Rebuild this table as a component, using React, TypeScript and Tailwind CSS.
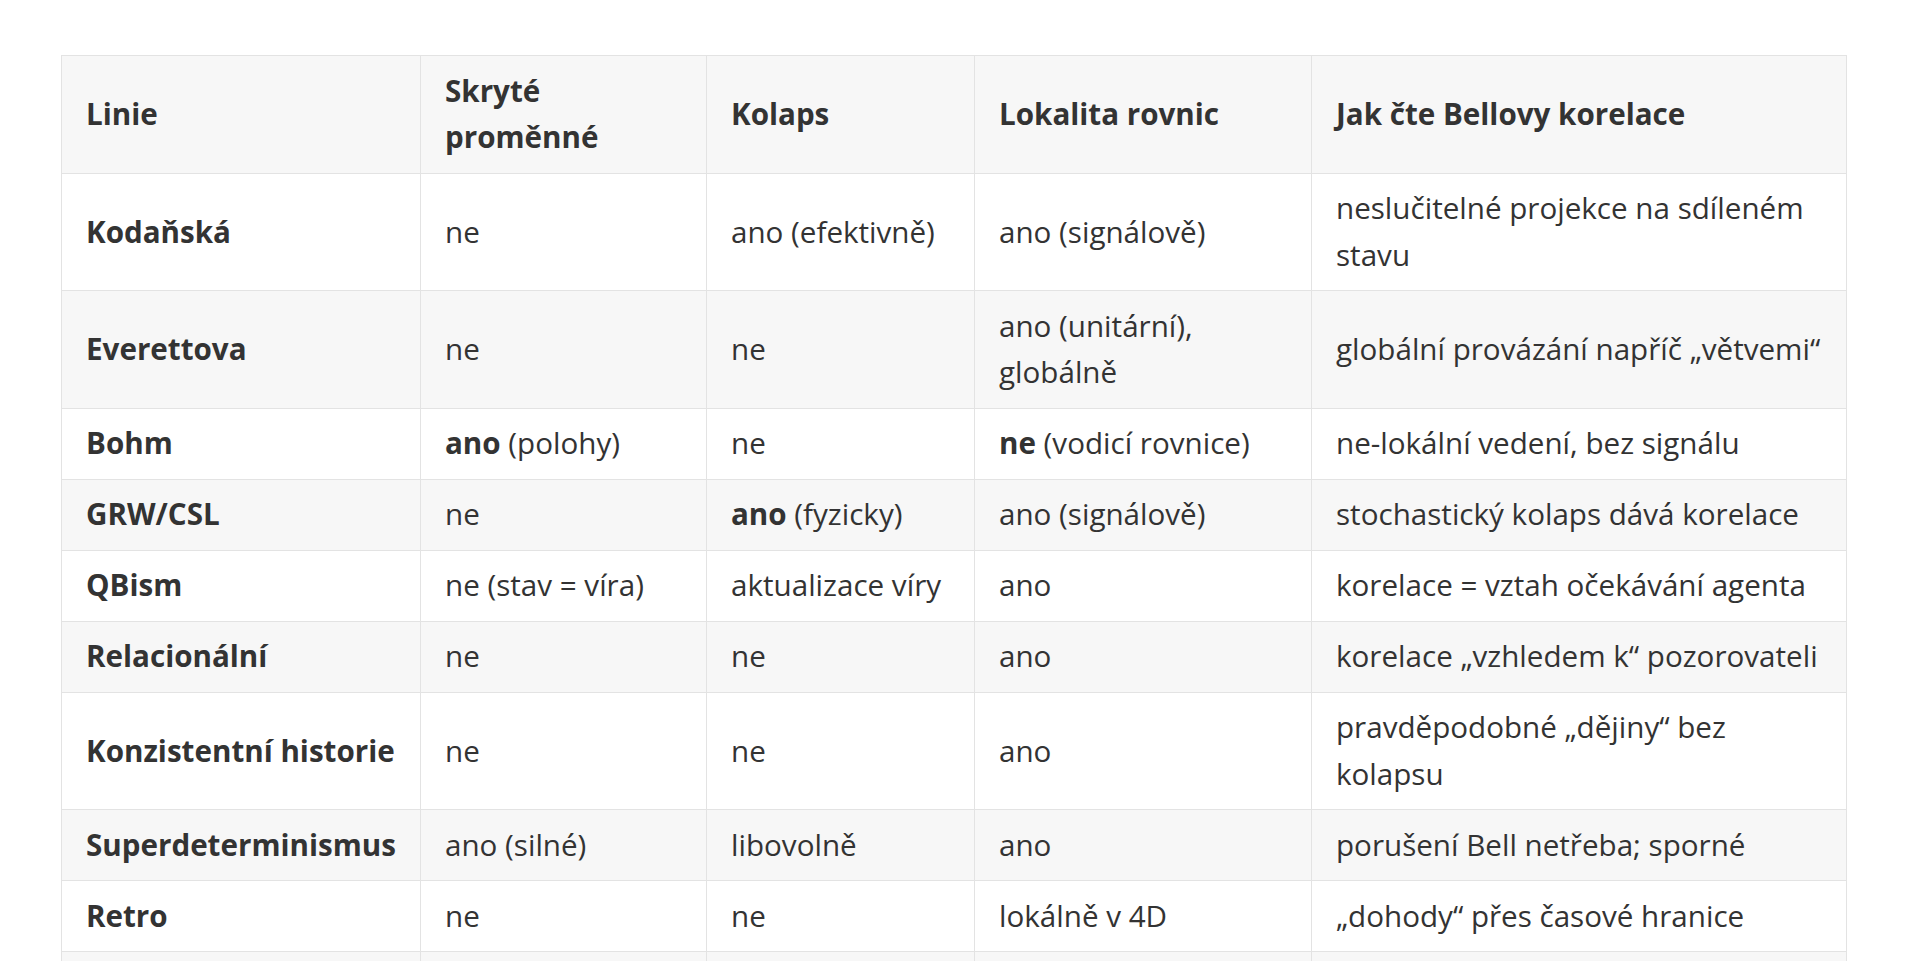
import React from "react";

type Cell = string | { b: string; rest?: string };

const rows: Cell[][] = [
  ["Kodaňská", "ne", "ano (efektivně)", "ano (signálově)", "neslučitelné projekce na sdíleném stavu"],
  ["Everettova", "ne", "ne", "ano (unitární), globálně", "globální provázání napříč „větvemi“"],
  ["Bohm", { b: "ano", rest: " (polohy)" }, "ne", { b: "ne", rest: " (vodicí rovnice)" }, "ne-lokální vedení, bez signálu"],
  ["GRW/CSL", "ne", { b: "ano", rest: " (fyzicky)" }, "ano (signálově)", "stochastický kolaps dává korelace"],
  ["QBism", "ne (stav = víra)", "aktualizace víry", "ano", "korelace = vztah očekávání agenta"],
  ["Relacionální", "ne", "ne", "ano", "korelace „vzhledem k“ pozorovateli"],
  ["Konzistentní historie", "ne", "ne", "ano", "pravděpodobné „dějiny“ bez kolapsu"],
  ["Superdeterminismus", "ano (silné)", "libovolně", "ano", "porušení Bell netřeba; sporné"],
  ["Retro", "ne", "ne", "lokálně v 4D", "„dohody“ přes časové hranice"],
  ["Transakční", "ne", "ano (efektivně)", "ano", "nabídka a potvrzení vln"],
];

const headers = ["Linie", "Skryté proměnné", "Kolaps", "Lokalita rovnic", "Jak čte Bellovy korelace"];

function renderCell(c: Cell) {
  if (typeof c === "string") return c;
  return (
    <>
      <strong className="font-bold">{c.b}</strong>
      {c.rest}
    </>
  );
}

export default function App() {
  return (
    <div className="h-screen bg-white pt-[55px] pl-[61px] font-['Open_Sans',sans-serif] text-[#333333] overflow-hidden">
      <table className="table-fixed border-collapse w-[1785px] text-[29.6px] leading-[46.5px]">
        <colgroup>
          <col className="w-[359px]" />
          <col className="w-[286px]" />
          <col className="w-[268px]" />
          <col className="w-[337px]" />
          <col className="w-[535px]" />
        </colgroup>
        <thead>
          <tr className="bg-[#f7f7f7]">
            {headers.map((h) => (
              <th
                key={h}
                className="border border-[#e3e3e3] pl-[24px] pr-[12px] py-[11.75px] text-left font-bold align-middle"
              >
                {h}
              </th>
            ))}
          </tr>
        </thead>
        <tbody>
          {rows.map((r, i) => (
            <tr key={i} className={i % 2 === 0 ? "bg-white" : "bg-[#f7f7f7]"}>
              {r.map((c, j) => (
                <td
                  key={j}
                  className={
                    "border border-[#e3e3e3] pl-[24px] pr-[12px] py-[11.75px] align-middle " +
                    (j === 0 ? "font-bold" : "")
                  }
                >
                  {renderCell(c)}
                </td>
              ))}
            </tr>
          ))}
        </tbody>
      </table>
    </div>
  );
}
